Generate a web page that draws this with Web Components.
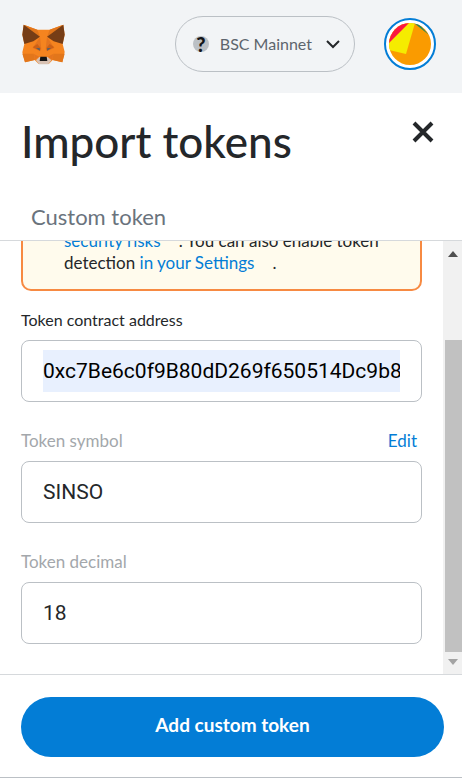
<!DOCTYPE html>
<html lang="en">
<head>
<meta charset="utf-8">
<meta name="viewport" content="width=device-width, initial-scale=1">
<title>Import tokens</title>
<style>
  html, body { height: 100%; margin: 0; background: #fff; }
  body { font-family: Lato, "Liberation Sans", sans-serif; color: #24272a; }
</style>
</head>
<body>
<wallet-popup>
  <wallet-header slot="header">BSC Mainnet</wallet-header>
  <page-heading slot="heading" tab="Custom token">Import tokens</page-heading>
  <scroll-pane slot="content">
    <warning-note>
      <a href="#risks">security risks</a>. You can also enable token detection <a href="#settings">in your Settings</a>.
    </warning-note>
    <token-field label="Token contract address" value="0xc7Be6c0f9B80dD269f650514Dc9b8" filled></token-field>
    <token-field label="Token symbol" value="SINSO" muted action="Edit"></token-field>
    <token-field label="Token decimal" value="18" muted></token-field>
  </scroll-pane>
  <action-footer slot="footer">Add custom token</action-footer>
</wallet-popup>

<script>
const define = (name, html, setup) => {
  const template = document.createElement('template');
  template.innerHTML = '<style>*{box-sizing:border-box}</style>' + html;
  customElements.define(name, class extends HTMLElement {
    constructor() {
      super();
      this.attachShadow({ mode: 'open' }).append(template.content.cloneNode(true));
    }
    connectedCallback() { if (setup) setup(this, this.shadowRoot); }
  });
};

define('fox-logo', `
  <style>:host{display:block;width:43px;height:41px} svg{display:block;width:100%;height:100%}</style>
  <svg viewBox="0 0 129 123" aria-label="Fox logo" role="img">
    <path fill="#f5841f" d="M5 2 46 17H83L124 2 128 32 122 60 128 84 121 115 92 108 80 120H50L38 108 9 115 1 85 7 60 1 32Z"/>
    <path fill="#e2761b" d="M5 2 46 17 54 38ZM124 2 83 17 75 38ZM1 89 35 89 38 108 9 115ZM128 89 94 89 92 108 121 115Z"/>
    <path fill="#763d16" d="M5 2 54 38 34 52 7 60 1 32Z"/>
    <path fill="#763d16" d="M124 2 75 38 95 52 122 60 128 32Z"/>
    <path fill="#e4751f" d="M54 38 58 76 54 82 32 72ZM75 38 71 76 75 82 97 72ZM36 90 52 98 38 108ZM93 90 77 98 92 108Z"/>
    <path fill="#cd6116" d="M32 70 46 60 56 72 54 80ZM97 70 83 60 73 72 75 80Z"/>
    <path fill="#54606c" d="M42 73 53 72 54 80ZM87 73 76 72 75 80Z"/>
    <path fill="#d7c1b3" d="M42 109 52 99H77L88 109 79 121H51Z"/>
    <path fill="#161616" d="M55 98H74L76 111H53Z"/>
  </svg>`);

define('network-picker', `
  <style>
    :host{display:block}
    button{display:flex;align-items:center;height:56px;padding:0 14px 0 17px;border:1px solid #bbc0c5;border-radius:28px;background:none;font:16px/24px Lato,"Liberation Sans",sans-serif;color:#5d656d;cursor:pointer}
    .mark{display:grid;place-items:center;width:16px;height:16px;border-radius:50%;background:#bbc0c5;margin-right:11px;font:900 20px/16px Lato,sans-serif;color:#141618}
    svg{margin-left:14px}
  </style>
  <button type="button"><span class="mark">?</span><slot></slot>
    <svg width="14" height="9" viewBox="0 0 14 9" fill="none" stroke="#24272a" stroke-width="2"><path d="M1 1 7 7 13 1"/></svg>
  </button>`);

define('account-avatar', `
  <style>:host{display:block} button{display:block;padding:3px;width:52px;height:52px;border:2px solid #037dd6;border-radius:50%;background:#fff;cursor:pointer} svg{display:block;border-radius:50%}</style>
  <button type="button" aria-label="Account">
    <svg width="42" height="42" viewBox="0 0 42 42">
      <path fill="#fa9b00" d="M0 0H42V42H0Z"/>
      <path fill="#f5ec00" d="M0 0H26L17 31 0 27Z"/>
      <path fill="#fb1640" d="M0 0H20L0 20Z"/>
      <path fill="#23865c" d="M25 0H29L40 12Z"/>
    </svg>
  </button>`);

define('wallet-header', `
  <style>:host{display:flex;align-items:center;height:93px;padding:0 26px 5px 22px;background:#f2f4f6;gap:29px;box-sizing:border-box} fox-logo{margin-right:auto}</style>
  <fox-logo></fox-logo><network-picker><slot></slot></network-picker><account-avatar></account-avatar>`);

define('page-heading', `
  <style>
    :host{display:block;border-bottom:1px solid #d6d9dc}
    .row{display:flex;justify-content:space-between;align-items:flex-start;padding:20px 28px 0 21px}
    h1{margin:0;font-size:44px;line-height:56px;font-weight:500}
    .close{display:block;margin-top:8px;padding:0;border:0;background:none;cursor:pointer}
    .close svg{display:block}
    .tab{display:block;margin:20px 0 0 21px;padding:14px 10px 9px;border:0;background:none;font:22px/28px Lato,"Liberation Sans",sans-serif;color:#6a737d;cursor:pointer}
  </style>
  <div class="row"><h1><slot></slot></h1>
    <button class="close" type="button" aria-label="Close"><svg width="22" height="22" viewBox="0 0 22 22" stroke="#24272a" stroke-width="4"><path d="M2 2 20 20M20 2 2 20"/></svg></button></div>
  <button class="tab" type="button" role="tab"></button>`,
  (el, root) => { root.querySelector('.tab').textContent = el.getAttribute('tab'); });

define('scroll-pane', `
  <style>
    :host{display:flex;min-height:0;overflow:hidden}
    .view{flex:1;min-width:0;overflow:hidden;display:flex;flex-direction:column;justify-content:flex-end;padding:0 21px 30px}
    .bar{width:19px;background:#f1f1f1;display:flex;flex-direction:column;align-items:center;padding:10px 0 9px}
    .thumb{flex:1;align-self:stretch;margin:83px 0 7px 2px;background:#c1c1c1}
    svg{display:block}
  </style>
  <div class="view"><slot></slot></div>
  <div class="bar" aria-hidden="true">
    <svg width="10" height="6" viewBox="0 0 10 6"><path fill="#505050" d="M0 6 5 0 10 6Z"/></svg>
    <div class="thumb"></div>
    <svg width="10" height="6" viewBox="0 0 10 6"><path fill="#a3a3a3" d="M0 0 5 6 10 0Z"/></svg>
  </div>`);

define('warning-note', `
  <style>
    :host{display:block;flex:none;margin-bottom:17px;padding:16px 28px 15px 41px;border:2px solid #f78a42;border-radius:10px;background:#fffbed;font-size:17px;line-height:22px;box-sizing:border-box}
    ::slotted(a){color:#037dd6;text-decoration:none;margin-right:18px}
  </style><slot></slot>`);

define('token-field', `
  <style>
    :host{display:block;flex:none}
    :host(:not(:last-child)){margin-bottom:27px}
    .top{display:flex;justify-content:space-between;padding-right:5px;margin-bottom:8px;font-size:16px;line-height:24px}
    :host([muted]) .top{font-size:17px}
    :host([muted]) label{color:#a3a7ab}
    a{color:#037dd6;text-decoration:none}
    .box{padding:9px 21px;border:1px solid #bbc0c5;border-radius:8px}
    input{display:block;width:100%;height:42px;margin:0;padding:0;border:0;outline:0;background:none;font:21px/28px Roboto,sans-serif;color:#24272a}
    :host([filled]) input{background:#e8f0fe;color:#000}
  </style>
  <div class="top"><label for="field"></label></div>
  <div class="box"><input id="field" type="text"></div>`,
  (el, root) => {
    root.querySelector('label').textContent = el.getAttribute('label');
    root.querySelector('input').value = el.getAttribute('value');
    if (el.hasAttribute('action')) {
      const link = document.createElement('a');
      link.href = '#edit';
      link.textContent = el.getAttribute('action');
      root.querySelector('.top').append(link);
    }
  });

define('action-footer', `
  <style>
    :host{display:block;padding:22px 18px 20px 21px;border-top:1px solid #d6d9dc;border-bottom:1px solid #bbc0c5}
    button{display:block;width:100%;height:60px;padding:0 0 5px;border:0;border-radius:30px;background:#037dd6;color:#fff;font:700 19px/24px Lato,"Liberation Sans",sans-serif;cursor:pointer}
  </style><button type="button"><slot></slot></button>`);

define('wallet-popup', `
  <style>
    :host{display:flex;flex-direction:column;height:100vh;margin-right:4px}
    ::slotted(*){flex:none}
    ::slotted(scroll-pane){flex:1}
  </style>
  <slot name="header"></slot><slot name="heading"></slot><slot name="content"></slot><slot name="footer"></slot>`);
</script>
</body>
</html>
